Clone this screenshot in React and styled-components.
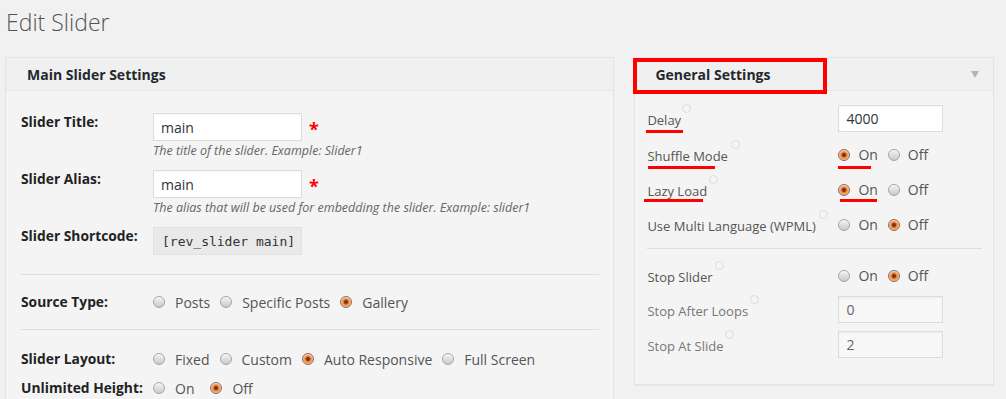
import React from "react";
import styled, { createGlobalStyle } from "styled-components";

const Global = createGlobalStyle`
  html, body { margin: 0; padding: 0; background: #f1f1f1; }
  body { font-family: "Open Sans", "Liberation Sans", sans-serif; color: #444; overflow: hidden; }
  * { box-sizing: border-box; }
`;

const Page = styled.div`
  padding: 0 12px 0 5px;
  width: 1006px;
  height: 399px;
  overflow: hidden;
`;

const Title = styled.h1`
  margin: 8px 0 20px 1px;
  font-size: 23px;
  line-height: 29px;
  font-weight: 300;
  color: #555;
`;

const Columns = styled.div`
  display: flex;
  align-items: flex-start;
  gap: 20px;
`;

const Panel = styled.section`
  position: relative;
  width: ${(p) => p.$width}px;
  border: 1px solid #e3e3e3;
  background: #f4f4f4;
  box-shadow: 0 1px 1px rgba(0, 0, 0, 0.04);
`;

const PanelHeader = styled.header`
  height: 33px;
  display: flex;
  align-items: center;
  justify-content: space-between;
  padding: 0 14px 0 ${(p) => p.$pad}px;
  background: #f0f0f0;
  border-bottom: 1px solid #e6e6e6;
  font-size: 14px;
  font-weight: 700;
  color: #23282d;
`;

const Caret = styled.span`
  width: 0;
  height: 0;
  border-left: 4px solid transparent;
  border-right: 4px solid transparent;
  border-top: 7px solid #b4b4b4;
`;

const HighlightBox = styled.div`
  position: absolute;
  left: -2px;
  top: 0px;
  width: 194px;
  height: 36px;
  border: 4px solid #ff0000;
  pointer-events: none;
`;

const LeftBody = styled.div`
  padding: 22px 14px 0 15px;
`;

const FieldRow = styled.div`
  display: grid;
  grid-template-columns: 132px 1fr;
  margin-bottom: ${(p) => p.$mb ?? 10}px;
`;

const BoldLabel = styled.div`
  font-size: 13.8px;
  line-height: ${(p) => p.$lh ?? 18}px;
  font-weight: 700;
  color: #222;
  white-space: nowrap;
`;

const InputLine = styled.div`
  display: flex;
  align-items: center;
`;

const TextInput = styled.div`
  width: ${(p) => p.$w}px;
  height: ${(p) => p.$h}px;
  display: flex;
  align-items: center;
  padding-left: 7px;
  background: ${(p) => (p.$disabled ? "#f7f7f7" : "#fff")};
  border: 1px solid #dcdcdc;
  box-shadow: inset 0 1px 2px rgba(0, 0, 0, 0.04);
  font-size: 14px;
  color: ${(p) => (p.$disabled ? "#666" : "#333")};
`;

const Required = styled.span`
  margin-left: 7px;
  color: #ff0000;
  font-size: 18px;
  font-weight: 700;
  line-height: 1;
  margin-top: 4px;
`;

const Help = styled.div`
  margin-top: 1px;
  font-size: 12.5px;
  line-height: 18px;
  font-style: italic;
  color: #666;
  white-space: nowrap;
`;

const Shortcode = styled.div`
  width: 149px;
  height: 28px;
  display: flex;
  align-items: center;
  padding-left: 8px;
  background: #e9e9e9;
  border: 1px solid #e0e0e0;
  font-family: "DejaVu Sans Mono", "Liberation Mono", monospace;
  font-size: 13px;
  color: #333;
`;

const Separator = styled.hr`
  border: 0;
  height: 1px;
  background: #dedede;
  margin: ${(p) => p.$top}px 0 ${(p) => p.$bottom}px;
`;

const Options = styled.div`
  display: flex;
  align-items: center;
  height: ${(p) => p.$h ?? 20}px;
`;

const Option = styled.label`
  display: flex;
  align-items: center;
  margin-right: ${(p) => p.$gap ?? 10}px;
  font-size: 14px;
  color: #555;
  white-space: nowrap;
`;

const Radio = styled.span`
  width: 12px;
  height: 12px;
  border-radius: 50%;
  flex: none;
  margin-right: ${(p) => p.$gap ?? 10}px;
  border: 1px solid ${(p) => (p.$on ? "#8a6a55" : "#a5a5a5")};
  background: ${(p) =>
    p.$on
      ? "radial-gradient(circle at 50% 50%, #6b2e0c 0, #8a3c10 1.6px, #e8803c 2.6px, #f6b27e 4.5px, #e9d6c8 6px)"
      : "linear-gradient(to bottom, #f4f4f4 0%, #d6d6d6 70%, #c9c9c9 100%)"};
  box-shadow: inset 0 1px 0 rgba(255, 255, 255, 0.6);
`;

const RightBody = styled.div`
  padding: 14px 11px 26px 12px;
`;

const SettingRow = styled.div`
  position: relative;
  display: grid;
  grid-template-columns: 191px 1fr;
  align-items: center;
  height: 27px;
  margin-bottom: ${(p) => p.$mb ?? 8}px;
`;

const SettingLabel = styled.div`
  font-size: 13px;
  line-height: 18px;
  color: ${(p) => (p.$muted ? "#777" : "#555")};
  white-space: nowrap;
  padding-top: 2px;
`;

const InfoDot = styled.span`
  display: inline-block;
  vertical-align: top;
  width: 9px;
  height: 9px;
  margin: -7px 0 0 ${(p) => p.$ml ?? 1}px;
  border-radius: 50%;
  border: 1px solid #dcdcdc;
`;

const RedLine = styled.span`
  position: absolute;
  left: ${(p) => p.$left}px;
  top: ${(p) => p.$top}px;
  width: ${(p) => p.$width}px;
  height: 3px;
  background: #ff0000;
`;

const Spacer = styled.div`
  height: 40px;
`;

function RadioGroup({ items, h, gap = 10, textGap = 10 }) {
  return (
    <Options $h={h}>
      {items.map(([text, on, g]) => (
        <Option key={text} $gap={g ?? gap}>
          <Radio $on={on} $gap={textGap} />
          {text}
        </Option>
      ))}
    </Options>
  );
}

export default function App() {
  return (
    <Page>
      <Global />
      <Title>Edit Slider</Title>
      <Columns>
        <Panel $width={610}>
          <PanelHeader $pad={21}>Main Slider Settings</PanelHeader>
          <LeftBody>
            <FieldRow>
              <BoldLabel>Slider Title:</BoldLabel>
              <div>
                <InputLine>
                  <TextInput $w={149} $h={28}>main</TextInput>
                  <Required>*</Required>
                </InputLine>
                <Help>The title of the slider. Example: Slider1</Help>
              </div>
            </FieldRow>
            <FieldRow>
              <BoldLabel>Slider Alias:</BoldLabel>
              <div>
                <InputLine>
                  <TextInput $w={149} $h={28}>main</TextInput>
                  <Required>*</Required>
                </InputLine>
                <Help>The alias that will be used for embedding the slider. Example: slider1</Help>
              </div>
            </FieldRow>
            <FieldRow $mb={0}>
              <BoldLabel>Slider Shortcode:</BoldLabel>
              <Shortcode>[rev_slider main]</Shortcode>
            </FieldRow>
            <Separator $top={19} $bottom={17} />
            <FieldRow $mb={0}>
              <BoldLabel $lh={20}>Source Type:</BoldLabel>
              <RadioGroup
                items={[
                  ["Posts", false],
                  ["Specific Posts", false],
                  ["Gallery", true],
                ]}
              />
            </FieldRow>
            <Separator $top={17} $bottom={19} />
            <FieldRow $mb={9}>
              <BoldLabel $lh={20}>Slider Layout:</BoldLabel>
              <RadioGroup
                items={[
                  ["Fixed", false],
                  ["Custom", false],
                  ["Auto Responsive", true],
                  ["Full Screen", false],
                ]}
              />
            </FieldRow>
            <FieldRow $mb={0}>
              <BoldLabel $lh={20}>Unlimited Height:</BoldLabel>
              <RadioGroup
                items={[
                  ["On", false, 16],
                  ["Off", true],
                ]}
              />
            </FieldRow>
            <Spacer />
          </LeftBody>
        </Panel>

        <Panel $width={360}>
          <PanelHeader $pad={20}>
            General Settings
            <Caret />
          </PanelHeader>
          <HighlightBox />
          <RightBody>
            <SettingRow>
              <SettingLabel>
                Delay<InfoDot />
              </SettingLabel>
              <TextInput $w={105} $h={27}>4000</TextInput>
              <RedLine $left={-1} $top={25} $width={37} />
            </SettingRow>
            <SettingRow>
              <SettingLabel>
                Shuffle Mode<InfoDot $ml={3} />
              </SettingLabel>
              <RadioGroup h={29} textGap={8} items={[["On", true], ["Off", false]]} />
              <RedLine $left={1} $top={26} $width={67} />
              <RedLine $left={191} $top={26} $width={33} />
            </SettingRow>
            <SettingRow>
              <SettingLabel>
                Lazy Load<InfoDot $ml={2} />
              </SettingLabel>
              <RadioGroup h={29} textGap={8} items={[["On", true], ["Off", false]]} />
              <RedLine $left={-3} $top={24} $width={59} />
              <RedLine $left={193} $top={24} $width={37} />
            </SettingRow>
            <SettingRow $mb={0}>
              <SettingLabel>
                Use Multi Language (WPML)<InfoDot $ml={3} />
              </SettingLabel>
              <RadioGroup h={29} textGap={8} items={[["On", false], ["Off", true]]} />
            </SettingRow>
            <Separator $top={11} $bottom={12} />
            <SettingRow>
              <SettingLabel>
                Stop Slider<InfoDot $ml={2} />
              </SettingLabel>
              <RadioGroup h={29} textGap={8} items={[["On", false], ["Off", true]]} />
            </SettingRow>
            <SettingRow>
              <SettingLabel $muted>
                Stop After Loops<InfoDot $ml={2} />
              </SettingLabel>
              <TextInput $w={105} $h={27} $disabled>0</TextInput>
            </SettingRow>
            <SettingRow $mb={0}>
              <SettingLabel $muted>
                Stop At Slide<InfoDot $ml={2} />
              </SettingLabel>
              <TextInput $w={105} $h={27} $disabled>2</TextInput>
            </SettingRow>
          </RightBody>
        </Panel>
      </Columns>
    </Page>
  );
}
